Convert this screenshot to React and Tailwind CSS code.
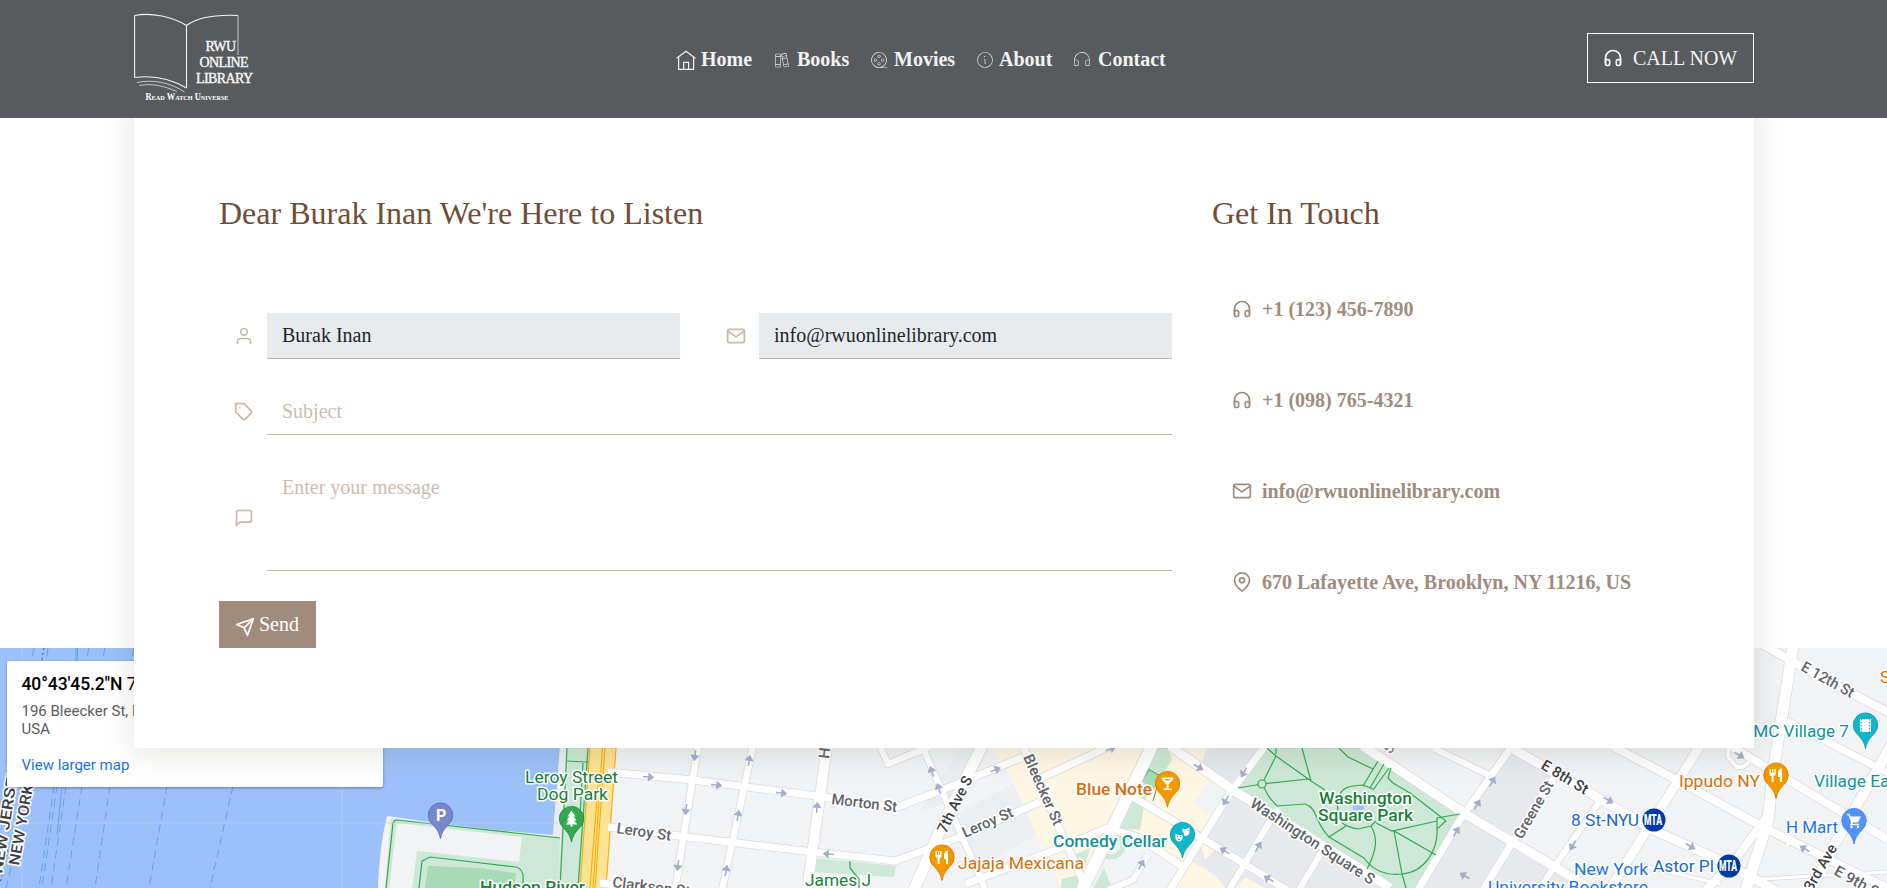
import React from "react";
import { FiHeadphones, FiUser, FiMail, FiTag, FiMessageSquare, FiSend, FiMapPin } from "react-icons/fi";
import { PiBooksThin, PiFilmReelThin, PiInfoThin, PiHeadphonesThin } from "react-icons/pi";

function HomeIcon() {
  return (
    <svg className="mt-0.5 h-[21px] w-[20px]" viewBox="0 0 20 21" fill="none" stroke="currentColor" strokeWidth="1.2">
      <path d="M.6 8.2 10 1.2l9.4 7M2.6 7v12.4h15V7M7.6 19.4v-7h5v7" />
    </svg>
  );
}

function Logo() {
  return (
    <svg className="h-[98px] w-[124px]" viewBox="134 10 124 98" fill="none" stroke="#f4f4f4">
      <path strokeWidth="1.1" d="M134.600 15.500V77.500M134.600 15.500C152 12 173 17 186.500 25.500V88M134.600 77.500C153 75 172 79.500 186.500 88M186.500 25.500C198 17 216 14.500 238 15.500" />
      <path strokeWidth="1" opacity=".7" d="M238 15.500V55M137 82.500C154 79 171 83 184.500 92M139.500 85.500C153 83 165 86.500 177 91.500" />
      <g fill="#fff" strokeWidth=".35" fontFamily="Liberation Serif, serif" fontSize="14">
        <text x="205.500" y="51" textLength="30.500">RWU</text>
        <text x="199.500" y="67" textLength="49">ONLINE</text>
        <text x="196" y="83" textLength="57">LIBRARY</text>
      </g>
      <text x="145.500" y="99.500" fill="#fff" stroke="none" fontFamily="Liberation Serif, serif" fontSize="9.500" fontWeight="700" textLength="83" style={{ fontVariant: "small-caps" }} lengthAdjust="spacingAndGlyphs">Read Watch Universe</text>
    </svg>
  );
}

const nav = [
  ["Home", <HomeIcon />, "w-[96px]", "gap-[5px]"],
  ["Books", <PiBooksThin className="mt-0.5 size-[19px]" />, "w-[97px]", "gap-[6px]"],
  ["Movies", <PiFilmReelThin className="mt-0.5 size-[20px]" />, "w-[106px]", "gap-[5px]"],
  ["About", <PiInfoThin className="mt-0.5 size-[20px]" />, "w-[97px]", "gap-[4px]"],
  ["Contact", <PiHeadphonesThin className="mt-0.5 size-[20px]" />, "w-[95px]", "gap-[6px]"],
];

function Header() {
  return (
    <header className="relative z-20 flex h-[118px] justify-between border-b border-[#6d595d] bg-[#585b5d] pl-[134px] pr-[133px] text-white">
      <div className="w-[200px] pt-[10px]">
        <Logo />
      </div>
      <nav className="-ml-[45px] flex h-[118px] items-center text-xl font-bold text-[#f2f2f2]">
        {nav.map(([label, icon, w, gap]) => (
          <a key={label} className={`flex items-center whitespace-nowrap ${w} ${gap}`}>
            {icon}
            <span className="pb-px">{label}</span>
          </a>
        ))}
      </nav>
      <div className="flex w-[200px] justify-end pt-[33px]">
        <a className="flex h-[50px] w-[167px] items-center gap-[10px] border border-white pl-[15px] text-xl text-[#f4f4f4]">
          <FiHeadphones className="size-5" />
          <span className="whitespace-nowrap">CALL NOW</span>
        </a>
      </div>
    </header>
  );
}

function Field({ icon: Icon, className, children }) {
  return (
    <div className={`flex ${className}`}>
      <div className="flex w-12 shrink-0 items-center justify-center pl-px text-[#c8b8ad]">
        <Icon className="size-5" />
      </div>
      <div className="flex-1 border-b border-[#c5b3a8]">{children}</div>
    </div>
  );
}

const contacts = [
  [FiHeadphones, "+1 (123) 456-7890"],
  [FiHeadphones, "+1 (098) 765-4321"],
  [FiMail, "info@rwuonlinelibrary.com"],
  [FiMapPin, "670 Lafayette Ave, Brooklyn, NY 11216, US"],
];

function ContactCard() {
  return (
    <section className="relative z-10 ml-[134px] -mb-[100px] -mt-6 flex h-[654px] w-[1620px] bg-white pl-[85px] pt-[95px] shadow-[0_5px_30px_rgba(90,85,70,0.16)]">
      <form className="w-[953px]">
        <h2 className="text-[32px] leading-[48px] text-[#6f4e37]">Dear Burak Inan We're Here to Listen</h2>
        <div className="mt-[76px] grid grid-cols-2 gap-x-[31px] gap-y-[30px] text-xl">
          <Field icon={FiUser} className="h-[46px]">
            <div className="flex h-full items-center bg-[#e7ebee] px-[15px] pb-px text-[#212529]">Burak Inan</div>
          </Field>
          <Field icon={FiMail} className="h-[46px]">
            <div className="flex h-full items-center bg-[#e7ebee] px-[15px] pb-px text-[#212529]">info@rwuonlinelibrary.com</div>
          </Field>
          <Field icon={FiTag} className="col-span-2 h-[46px]">
            <div className="flex h-full items-center px-[15px] pb-px text-[#cabcb2]">Subject</div>
          </Field>
          <Field icon={FiMessageSquare} className="col-span-2 h-[106px]">
            <div className="px-[15px] pt-[7px] leading-[30px] text-[#cabcb2]">Enter your message</div>
          </Field>
        </div>
        <button type="button" className="mt-[30px] flex h-[47px] w-[97px] items-center gap-[4px] bg-[#a08b7c] pl-4 text-xl text-white">
          <FiSend className="mt-[4px] size-5" />
          <span className="pb-px">Send</span>
        </button>
      </form>
      <aside className="ml-10">
        <h2 className="text-[32px] leading-[48px] text-[#6f4e37]">Get In Touch</h2>
        <ul className="mt-[27px] pl-5 text-xl font-bold text-[#a08b7c]">
          {contacts.map(([Icon, label]) => (
            <li key={label} className="flex h-[91px] items-center gap-[10px]">
              <Icon className="mb-px size-5" />
              <span className="whitespace-nowrap pb-0.5">{label}</span>
            </li>
          ))}
        </ul>
      </aside>
    </section>
  );
}

/* Street centre lines: [path, width] */
const streets = [
  ["M698 746 675 890", 6.5],
  ["M753 746 722 890", 6.5],
  ["M827 746 807 890", 10],
  ["M608 772 693 780 817 796 895 808 960 783 1023 757", 7],
  ["M608 827 687 837 813 852 895 861 960 837 1040 802", 7],
  ["M600 883 690 893", 7],
  ["M880 746 888 764 925 748", 6],
  ["M900 759 930 747", 6],
  ["M922 746 980 877 985 890", 6],
  ["M982 746 937 837 914 890", 11],
  ["M1023 746 1060 830 1087 890", 7],
  ["M1041 778 1115 744", 7],
  ["M966 884 1060 848 1107 828 1138 837 1183 867", 7],
  ["M1152 746 1113 827 1082 890", 12],
  ["M1128 794 1200 837 1243 863 1287 890", 7],
  ["M1265 746 1230 793 1170 890", 7],
  ["M1170 746 1233 790 1367 873 1390 888", 9],
  ["M1278 808 1229 890", 6],
  ["M1327 843 1299 890", 6],
  ["M1148 855 1133 880 1108 890", 6],
  ["M1363 746 1467 815 1560 870 1592 890", 9],
  ["M1512 746 1460 820 1418 890", 7],
  ["M1508 746 1590 793 1653 830 1713 857 1775 890", 9],
  ["M1554 778 1512 843 1483 890", 7],
  ["M1600 801 1550 873 1540 890", 6],
  ["M1433 748 1493 777", 6],
  ["M1700 746 1609 890", 9],
  ["M1612 746 1677 780 1763 827 1887 888", 8],
  ["M1720 740 1800 787 1887 839", 8],
  ["M1728 746V757L1737 767H1743L1749 762", 4],
  ["M1794 640 1773 773 1768 820 1746 890", 11],
  ["M1768 815 1735 860 1704 892", 8],
  ["M1762 644 1820 677 1890 713", 8],
  ["M1787 721 1890 774", 7],
  ["M1892 744 1833 847 1811 890", 10],
  ["M1640 865 1720 884", 3],
  ["M1792 835 1787 846M1760 879 1887 872", 3],
];

const parkPaths =
  "M1238 788 1262 784 1308 779 1325 790M1262 784 1276 756 1267 748M1276 756 1311 781 1302 748M1276 754V748M1339 748 1348 757 1373 769M1378 761 1363 786M1384 764 1370 788M1389 768 1373 790M1391 768 1388 778 1393 783 1410 793 1432 810 1446 821 1437 829 1437 818 1460 814M1437 829C1438 850 1425 872 1402 874L1406 888M1262 784 1269 797 1277 806 1305 804C1318 808 1314 822 1329 837L1364 858C1372 869 1385 876 1402 874L1394 831 1436 855M1437 821 1392 831 1376 823M1329 837 1346 826M1371 826C1378 838 1377 850 1367 869M1338 800C1341 785 1352 786 1363 785L1373 789M1338 800C1335 824 1346 827 1358 829L1371 826 1376 821";

/* One-way arrows: [x, y, angle] */
const arrows = [
  [648, 777, 5], [716, 785, 6], [781, 793, 6], [695, 755, 98], [686, 809, 98], [678, 865, 98],
  [749, 761, -80], [738, 816, -80], [726, 871, -80], [817, 808, -85], [829, 854, 185],
  [932, 772, -108], [939, 789, -108], [995, 770, -22], [1110, 749, -22], [1198, 767, 30],
  [1244, 772, 120], [1226, 800, 120], [1225, 851, 210], [1258, 847, -60], [1269, 879, 210],
  [1141, 865, -60], [1456, 832, -60], [1477, 805, -60], [1492, 782, -60], [1465, 876, 210],
  [1573, 845, 120], [1608, 800, 30], [1690, 846, 30], [1739, 755, 30], [1805, 849, 210],
];

/* Street names: [text, x, y, angle, length, colour] */
const streetNames = [
  ["Morton St", 831, 804, 7, 66, "#5f6368"],
  ["Leroy St", 616, 833, 8, 55, "#5f6368"],
  ["Clarkson St", 612, 887, 7, 78, "#5f6368"],
  ["Barrow St", 828, 741, 5, 62, "#80868b"],
  ["7th Ave S", 946, 834, -64, 61, "#3c4043"],
  ["Leroy St", 965, 838, -24, 54, "#5f6368"],
  ["Bleecker St", 1023, 757, 66, 76, "#5f6368"],
  ["Washington Square S", 1249, 806, 33, 145, "#5f6368"],
  ["E 8th St", 1540, 768, 31, 52, "#3c4043"],
  ["Greene St", 1522, 840, -60, 64, "#5f6368"],
  ["E 12th St", 1800, 670, 29, 58, "#5f6368"],
  ["3rd Ave", 1812, 892, -60, 51, "#3c4043"],
  ["E 9th St", 1833, 874, 29, 54, "#5f6368"],
  ["H", 829, 759, -84, 11, "#5f6368"],
  ["5", 1390, 755, -52, 9, "#80868b"],
  ["NEW YORK", 19, 866, -80, 82, "#3c4043"],
  ["NEW JERSEY", 2, 874, -81, 108, "#3c4043"],
];

/* Place names: [text, x, y, length, colour, weight] */
const places = [
  ["Leroy Street", 525, 783, 93, "#188038", 400],
  ["Dog Park", 537, 800, 71, "#188038", 400],
  ["Hudson River", 480, 893, 105, "#188038", 500],
  ["James J", 805, 886, 66, "#188038", 400],
  ["Jajaja Mexicana", 958, 869, 126, "#d56e0c", 400],
  ["Blue Note", 1076, 795, 76, "#d56e0c", 500],
  ["Comedy Cellar", 1053, 847, 114, "#129299", 500],
  ["Washington", 1319, 804, 93, "#188038", 500],
  ["Square Park", 1318, 821, 95, "#188038", 500],
  ["8 St-NYU", 1571, 826, 68, "#1967d2", 400],
  ["Astor Pl", 1653, 872, 61, "#1967d2", 400],
  ["New York", 1574, 875, 74, "#1a73e8", 400],
  ["University Bookstore", 1488, 893, 160, "#1a73e8", 400],
  ["Ippudo NY", 1679, 787, 81, "#d56e0c", 400],
  ["AMC Village 7", 1742, 737, 107, "#129299", 400],
  ["Village East", 1814, 787, 90, "#129299", 400],
  ["H Mart", 1786, 833, 52, "#1a73e8", 400],
  ["S", 1880, 683, 10, "#d56e0c", 400],
];

const glyphs = {
  parking: <text x="-4.500" y="6" fontSize="16" fontWeight="700" fill="#fff" fontFamily="Roboto, sans-serif">P</text>,
  tree: <path fill="#fff" d="M0-8 4-2H2L5 2H2.500L6 6H1V8H-1V6H-6L-2.500 2H-5L-2-2H-4Z" />,
  food: <path fill="#fff" d="M-6.500-6H-5V-2H-4V-6H-2.800V-2H-1.800V-6H-.4V-1C-.4 0-1.200 1-2.400 1V7H-4.400V1C-5.600 1-6.500 0-6.500-1ZM6-6.500V7H4V2H2V-2C2-5 4-6.500 6-6.500Z" />,
  drink: <path fill="#fff" d="M-6-6H6V-4.500L1 1V5H4V6.500H-4V5H-1V1L-6-4.500ZM-3-4.500-1.800-3H1.800L3-4.500Z" fillRule="evenodd" />,
  masks: (
    <g>
      <path fill="#fff" d="M-7-1Q-3.500 1.500 0 0V4C-1 8-6 8-7 4ZM0-6Q3.500-4.500 7-7V-2C6 2 3 2 1.500 1V-2H0Z" />
      <path stroke="#12b5cb" strokeWidth="1" d="M-5.500 2H-4.500M-2.500 2H-1.500M2-3.500H3M5-4H6M-5 4.500Q-3.500 6-2 4.500" fill="none" />
    </g>
  ),
  film: (
    <g>
      <path fill="#fff" d="M-5.500-6H5.500V7H-5.500Z" />
      <path stroke="#12b5cb" strokeWidth="1.200" strokeDasharray="1.500 1.500" d="M-4-6V7M4-6V7" />
    </g>
  ),
  cart: (
    <g>
      <path fill="#fff" d="M-4-4H7L4 2H-2Z" />
      <path stroke="#fff" strokeWidth="1.500" fill="none" d="M-7-6H-5L-2 2-3 4H5" />
      <circle cx="-2.500" cy="6.500" r="1.300" fill="#fff" />
      <circle cx="4" cy="6.500" r="1.300" fill="#fff" />
    </g>
  ),
};

/* Pins: [x, y, fill, outline, glyph] */
const pins = [
  [440.5, 815, "#7986cb", "#5c6bc0", "parking"],
  [571.5, 818.5, "#34a853", "#1e8e3e", "tree"],
  [942, 857, "#f29900", "#e37400", "food"],
  [1167.5, 783.5, "#f29900", "#e37400", "drink"],
  [1182.5, 834.5, "#12b5cb", "#129eaf", "masks"],
  [1865.5, 725, "#12b5cb", "#129eaf", "film"],
  [1776, 775, "#f29900", "#e37400", "food"],
  [1854, 820.5, "#5491f5", "#4285f4", "cart"],
];

const ferries = [
  "M34 648 30 668", "M48 648 45 668", "M89 648 84 668", "M105 648 101 668", "M134 648 130 668",
  "M54 786 39 888", "M57 786 42 888", "M66 786 51 888", "M82 786 66 888", "M110 786 95 888",
  "M167 786 149 888", "M233 786 210 888", "M14 855 6 888",
];

function CityMap() {
  return (
    <svg className="block h-[240px] w-full" viewBox="0 648 1887 240" fontFamily="Roboto, sans-serif">
      <rect x="0" y="648" width="1887" height="240" fill="#f1f3f5" />
      <g fill="#e7e9ed">
        <path d="M1205 748H1265L1235 788 1190 760ZM1225 785 1390 888H1170L1225 800ZM1380 890 1467 815 1592 890ZM1467 815 1512 750 1556 776 1514 842Z" />
        <path d="M960 748H985L960 800 920 810 940 780ZM945 820 1020 780 1045 830 975 870Z" opacity=".4" />
      </g>
      <g fill="#fef7e4">
        <path d="M990 748H1153L1113 828 1085 888H1061L1045 855 1010 775Z" />
        <path d="M1170 748H1207L1200 767 1213 777 1193 803 1214 817 1197 845 1182 863 1120 825 1135 794Z" />
        <path d="M1190 860 1215 875 1225 888H1172ZM1200 840 1215 850 1205 860ZM1245 877 1265 888H1235Z" />
      </g>
      <g fill="#cde8d6">
        <path d="M1265 748H1365L1465 815 1418 888H1385L1234 790Z" />
        <path d="M1155 748H1168L1172 760 1145 800 1140 830 1117 828Z" />
        <path d="M814 858 896 866 894 877 812 872ZM1063 860 1090 848 1082 876ZM1062 879 1078 875 1082 888H1061ZM1104 868 1112 888H1093Z" />
        <circle cx="1111" cy="845" r="12" fill="none" stroke="#cde8d6" strokeWidth="5" />
      </g>
      <path d="M1146 767 1160 775 1154 790 1142 781Z" fill="#a8dab5" />
      <path d="M1145 767 1160 776 1153 801M1149 770 1141 782" fill="none" stroke="#34a853" />

      {/* River, pier and riverside park */}
      <path d="M0 648H560V748L553 835 480 829 387 816C381 840 379 864 378 888H0Z" fill="#9cc0f9" />
      <path d="M560 748 553 836 522 833 519 888H585L590 748Z" fill="#e9edf0" />
      <path d="M391 818 560 837 558 888H385ZM567 748H589L581 888H558Z" fill="#cde8d6" />
      <path d="M397 823 522 837 519 862 417 851 412 888H389Z" fill="#f1f3f5" />
      <path d="M428 866 480 868 516 873 514 888H425Z" fill="#a8dab5" />
      <path d="M386 888 393 823Q394 820 397 820L560 838M419 888 422 861 430 857 516 867Q524 869 523 880V888M567 748 560 888M588 748 578 888M567 761 603 763M583 763 580 815" fill="none" stroke="#34a853" strokeWidth="1.200" />
      <path d="M590 748H616L606 888H580Z" fill="#fde293" />
      <path d="M590 748 580 888M602.500 748 593 888M605 748 595 888M599 772 590 888M616 748 606 888" stroke="#f9ab00" fill="none" strokeWidth="1.100" />
      <g fill="none" stroke="#669df6" strokeWidth="1" strokeDasharray="8 5">
        {ferries.map((d) => <path key={d} d={d} />)}
      </g>
      <path d="M76 648V668M77.500 648V668M62 786 57 835" stroke="#669df6" />
      <path d="M44 648 38 680M8 850 0 884" stroke="#555" strokeDasharray="2 3" />
      <path d="M22 648V888M342 748V888M0 823H560" stroke="#b4d0fb" strokeWidth=".7" />

      {/* Streets */}
      <g fill="none" stroke="#d9dce2" strokeLinejoin="round">
        {streets.map(([d, w]) => <path key={d} d={d} strokeWidth={w + 1.6} />)}
      </g>
      <g fill="none" stroke="#fff" strokeLinejoin="round">
        {streets.map(([d, w]) => <path key={d} d={d} strokeWidth={w} />)}
      </g>
      <g fill="none" stroke="#34a853" strokeWidth="1.200">
        <path d={parkPaths} />
        <circle cx="1262" cy="784" r="4" fill="#cde8d6" />
        <path d="M850 861V868L859 879V888" />
      </g>
      <rect x="1353" y="805" width="11" height="5" fill="#9cc0f9" />
      <g stroke="#a6acca" strokeWidth="1.600" fill="#a6acca">
        {arrows.map(([x, y, a]) => (
          <path key={`${x}-${y}`} transform={`translate(${x} ${y}) rotate(${a})`} d="M-5 0H2M1-3 5 0 1 3Z" />
        ))}
      </g>

      <g stroke="#fff" strokeWidth="3" strokeLinejoin="round" paintOrder="stroke">
        {streetNames.map(([t, x, y, a, len, c]) => (
          <text key={`${t}${x}`} transform={`translate(${x} ${y}) rotate(${a})`} fill={c} fontSize="15" fontWeight="500" textLength={len} lengthAdjust="spacingAndGlyphs">{t}</text>
        ))}
        {places.map(([t, x, y, len, c, w]) => (
          <text key={t} x={x} y={y} fill={c} fontSize="16.500" fontWeight={w} textLength={len} lengthAdjust="spacingAndGlyphs">{t}</text>
        ))}
      </g>

      {pins.map(([x, y, fill, line, glyph]) => (
        <g key={`${x}`} transform={`translate(${x} ${y})`}>
          <path d="M0 23.500C-1.500 16-4.500 13.500-8 9.300A12.200 12.200 0 1 1 8 9.300C4.500 13.500 1.500 16 0 23.500Z" fill={fill} stroke={line} strokeWidth=".9" />
          {glyphs[glyph]}
        </g>
      ))}
      {[[1654, 820], [1729, 866]].map(([x, y]) => (
        <g key={x}>
          <circle cx={x} cy={y} r="11.500" fill="#0039a6" />
          <text x={x - 10} y={y + 5} fill="#fff" fontSize="14" fontWeight="900" textLength="18" lengthAdjust="spacingAndGlyphs">MTA</text>
        </g>
      ))}
    </svg>
  );
}

export default function App() {
  return (
    <div className="h-[888px] w-[1887px] overflow-hidden bg-white font-['Liberation_Serif',serif]">
      <Header />
      <ContactCard />
      <div className="relative">
        <CityMap />
        <div className="absolute left-[7px] top-[13px] h-[126px] w-[376px] rounded-[2px] bg-white pl-[14.5px] pt-[13px] font-[Roboto,sans-serif] text-sm shadow-[0_1px_3px_rgba(0,0,0,0.35)]">
          <div className="whitespace-nowrap text-[17.5px] font-medium leading-5 tracking-[-0.1px] text-black">40°43'45.2"N <span className="font-normal">73°59'58.3"W</span></div>
          <div className="mt-2 w-[200px] text-[15px] leading-[18px] text-[#5b5b5b]">196 Bleecker St, New York, USA</div>
          <div className="mt-[18px] text-[15px] leading-[18px] text-[#1a73e8]">View larger map</div>
        </div>
      </div>
    </div>
  );
}
